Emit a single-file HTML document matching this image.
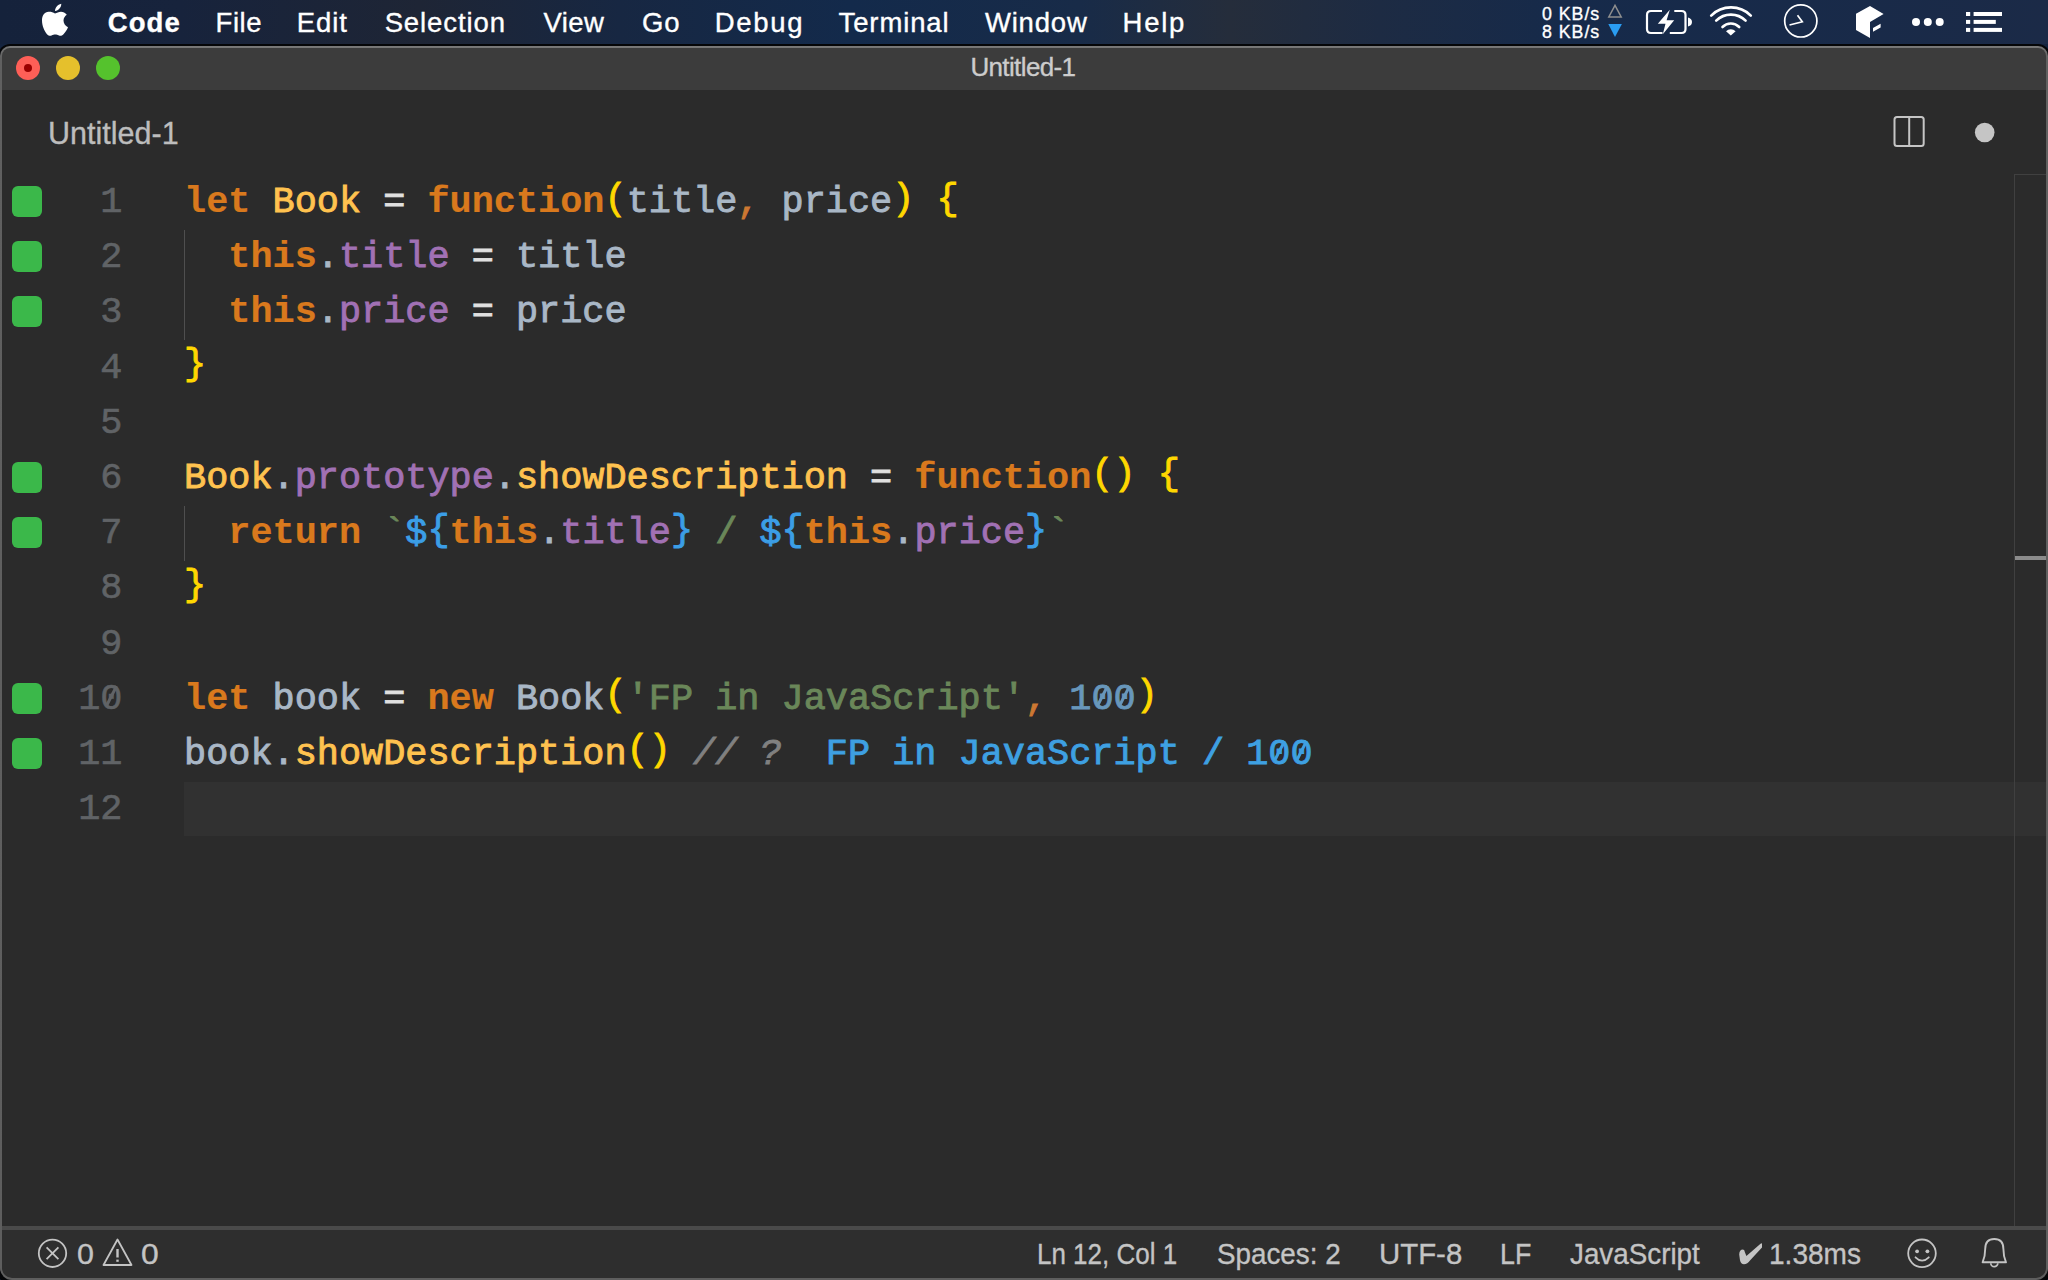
<!DOCTYPE html>
<html><head><meta charset="utf-8">
<style>
html,body{margin:0;padding:0;width:2048px;height:1280px;overflow:hidden;background:#15243f;}
*{box-sizing:border-box}
.a{position:absolute}
.tx{position:absolute;white-space:nowrap;font-family:"Liberation Sans",sans-serif;-webkit-text-stroke:0.35px}
#menubar{position:absolute;left:0;top:0;width:2048px;height:44px;background:linear-gradient(90deg,#15223b 0,#17233c 180px,#1e2535 420px,#172742 620px,#132a4b 850px,#182b48 1080px,#252d3b 1230px,#1d2b43 1380px,#162a4a 1560px,#182a49 1800px,#1b2a47 2048px)}
#shadow{position:absolute;left:-2px;top:44px;width:2052px;height:1240px;background:#050608;border-radius:12px}
#win{position:absolute;left:0;top:46px;width:2048px;height:1234px;background:linear-gradient(#7a7a7a 0,#747474 2px,#606060 12px,#5e5e5e);border-radius:10px 10px 12px 12px;overflow:hidden}
#titlebar{position:absolute;left:2px;top:2px;width:2044px;height:42px;background:#3c3c3c;border-radius:8px 8px 0 0}
#editor{position:absolute;left:2px;top:44px;width:2044px;height:1136px;background:#2b2b2b}
#status{position:absolute;left:2px;top:1180px;width:2044px;height:52px;background:#2e2e2e;border-top:4px solid #4a4a4a;border-radius:0 0 10px 10px}
.tl{position:absolute;top:56px;width:24px;height:24px;border-radius:50%}
#code{position:absolute;left:184px;top:175px;font-family:"Liberation Mono",monospace;font-size:36.89px;line-height:55.2px;white-space:pre;color:#a9b7c6;-webkit-text-stroke:0.9px}
#code div{height:55.2px}
#nums{position:absolute;left:38.5px;width:84px;top:175px;font-family:"Liberation Mono",monospace;font-size:36.89px;line-height:55.2px;white-space:pre;color:#606366;text-align:right;-webkit-text-stroke:0.6px}
#nums div{height:55.2px}
.gs{position:absolute;left:12px;width:30px;height:31px;background:#3bb84a;border-radius:6px}
.k{color:#d9791d;font-weight:bold;-webkit-text-stroke:0.2px}
.c{color:#ffc24f}
.p{color:#ffd700;position:relative;top:-3.5px}
.up{position:relative;top:-3px}
.o{color:#e0e0e0}
.pr{color:#a171b4}
.s{color:#6a8759}
.n{color:#6897bb}
.t{color:#3b9ee6}
.cm{color:#808080;font-style:italic}
.q{color:#3ea0e2}
.cma{color:#cc7832}
.z{position:relative}
.z::after{content:"";position:absolute;left:9.6px;top:7px;width:3.2px;height:22px;background:currentColor;transform:rotate(27deg)}
</style></head><body>
<div id="menubar"></div>
<div id="shadow"></div>
<div id="win">
  <div id="titlebar"></div>
  <div id="editor"></div>
  <div id="status"></div>
</div>
<div class="tl" style="left:16px;background:#fe5f57"></div>
<div class="a" style="left:24px;top:64px;width:8px;height:8px;border-radius:50%;background:#9a0000"></div>
<div class="tl" style="left:56px;background:#e5c02c"></div>
<div class="tl" style="left:96px;background:#55c22d"></div>
<div class="a" style="left:184px;top:782px;width:1862px;height:54px;background:#313131"></div>
<div class="a" style="left:2014px;top:174px;width:32px;height:1px;background:#404040"></div>
<div class="a" style="left:2014px;top:174px;width:1px;height:1052px;background:#404040"></div>
<div class="a" style="left:2015px;top:556px;width:31px;height:4px;background:#8b8b8b"></div>
<div class="a" style="left:184px;top:230px;width:1px;height:110px;background:#4f4f4f"></div>
<div class="a" style="left:184px;top:506px;width:1px;height:55px;background:#4f4f4f"></div>
<svg class="a" style="left:0;top:0" width="80" height="44" viewBox="0 0 80 44"><path fill="#fff" d="M55 13.6C53 12.2 51 11.7 48.6 11.8C44.6 12 42 15.5 42 20.6C42 26 44.5 31.4 47 34.2C48.5 35.8 50 36.1 51.5 35.6C53 35 54 34.6 55.2 34.6C56.5 34.6 57.5 35 59 35.6C60.5 36.1 62 35.8 63.5 34.2C65.5 32 67.2 29.5 68 27.2C65.3 26 63.5 23.5 63.5 20.6C63.5 18 65 16 66.8 14.8C65.3 12.8 63 11.8 61 11.8C58.5 11.8 57 13 55 13.6Z"/><path fill="#fff" d="M55 11C55 8 57.5 4.6 61.3 3.8C61.3 7.5 58.5 10.6 55 11Z"/></svg>
<svg class="a" style="left:1600px;top:0" width="448" height="44" viewBox="1600 0 448 44">
<path d="M1615 5.4L1621.2 17L1608.8 17Z" fill="none" stroke="#8e8e8e" stroke-width="1.5"/>
<path d="M1608.3 24L1621.9 24L1615 37Z" fill="#2a9df2"/>
<path d="M1662 11H1651Q1647 11 1647 15V29Q1647 33 1651 33H1662.5" fill="none" stroke="#fff" stroke-width="2.2"/>
<path d="M1674.3 11H1681.5Q1685.5 11 1685.5 15V29Q1685.5 33 1681.5 33H1669.8" fill="none" stroke="#fff" stroke-width="2.2"/>
<path d="M1688 17.5Q1692 18.5 1692 22Q1692 25.5 1688 26.5Z" fill="#fff"/>
<path d="M1669.8 9.8L1657.8 23.8H1665.5L1662.8 34.2L1674.2 20.2H1666.6Z" fill="#fff"/>
<path d="M1711.2 15.6A28 28 0 0 1 1750.8 15.6" fill="none" stroke="#fff" stroke-width="2.6" stroke-linecap="round"/>
<path d="M1716.2 20.7A20.8 20.8 0 0 1 1745.6 20.7" fill="none" stroke="#fff" stroke-width="2.6" stroke-linecap="round"/>
<path d="M1722.5 27A11.8 11.8 0 0 1 1739.2 27" fill="none" stroke="#fff" stroke-width="2.6" stroke-linecap="round"/>
<path d="M1730.8 35.6L1726 31.3A6.8 6.8 0 0 1 1735.6 31.3Z" fill="#fff"/>
<circle cx="1800.8" cy="20.9" r="16.1" fill="none" stroke="#fff" stroke-width="1.7"/>
<path d="M1797.5 15.3L1802.3 21.7L1789.5 25" fill="none" stroke="#fff" stroke-width="1.7"/>
<path d="M1870 6L1883.6 14L1870 22V38L1856 30V13.8Z" fill="#fff"/>
<path d="M1873 28L1880.6 23.8V27.4L1873 31.7Z" fill="#fff"/>
<circle cx="1916" cy="22" r="4" fill="#fff"/><circle cx="1927.8" cy="22" r="4" fill="#fff"/><circle cx="1939.7" cy="22" r="4" fill="#fff"/>
<rect x="1966" y="12" width="4.2" height="4" fill="#fff"/><rect x="1966" y="19.9" width="4.2" height="4" fill="#fff"/><rect x="1966" y="27.9" width="4.2" height="4" fill="#fff"/>
<rect x="1973.6" y="12" width="28.4" height="4" fill="#fff"/><rect x="1973.6" y="19.9" width="22.2" height="4" fill="#fff"/><rect x="1973.6" y="27.9" width="28.4" height="4" fill="#fff"/>
</svg>
<div class="tx" style="left:107.84px;top:-7.23px;font-size:27.5px;line-height:60px;letter-spacing:1.031px;color:#ffffff;font-weight:bold;">Code</div>
<div class="tx" style="left:215.55px;top:-7.23px;font-size:27.5px;line-height:60px;letter-spacing:0.550px;color:#ffffff;">File</div>
<div class="tx" style="left:296.85px;top:-7.23px;font-size:27.5px;line-height:60px;letter-spacing:0.889px;color:#ffffff;">Edit</div>
<div class="tx" style="left:384.64px;top:-7.23px;font-size:27.5px;line-height:60px;letter-spacing:0.897px;color:#ffffff;">Selection</div>
<div class="tx" style="left:543.40px;top:-7.23px;font-size:27.5px;line-height:60px;letter-spacing:0.452px;color:#ffffff;">View</div>
<div class="tx" style="left:641.91px;top:-7.23px;font-size:27.5px;line-height:60px;letter-spacing:0.919px;color:#ffffff;">Go</div>
<div class="tx" style="left:714.65px;top:-7.23px;font-size:27.5px;line-height:60px;letter-spacing:1.689px;color:#ffffff;">Debug</div>
<div class="tx" style="left:838.57px;top:-7.23px;font-size:27.5px;line-height:60px;letter-spacing:0.875px;color:#ffffff;">Terminal</div>
<div class="tx" style="left:984.90px;top:-7.23px;font-size:27.5px;line-height:60px;letter-spacing:0.831px;color:#ffffff;">Window</div>
<div class="tx" style="left:1122.55px;top:-7.23px;font-size:27.5px;line-height:60px;letter-spacing:1.768px;color:#ffffff;">Help</div>
<div class="tx" style="left:1542.04px;top:-16.17px;font-size:17.8px;line-height:60px;letter-spacing:0.955px;color:#ffffff;">0 KB/s</div>
<div class="tx" style="left:1542.04px;top:2.23px;font-size:17.8px;line-height:60px;letter-spacing:0.955px;color:#ffffff;">8 KB/s</div>
<div class="tx" style="left:970.38px;top:37.29px;font-size:26px;line-height:60px;letter-spacing:-0.622px;color:#cccccc;">Untitled-1</div>
<div class="tx" style="left:47.89px;top:102.91px;font-size:32px;line-height:60px;letter-spacing:0.000px;color:#bdbdbd;transform:scaleX(0.9539);transform-origin:0 0;">Untitled-1</div>
<div class="tx" style="left:76.65px;top:1224.15px;font-size:29px;line-height:60px;letter-spacing:0.000px;color:#c4c4c4;transform:scaleX(1.0483);transform-origin:0 0;">0</div>
<div class="tx" style="left:141.31px;top:1224.15px;font-size:29px;line-height:60px;letter-spacing:0.000px;color:#c4c4c4;transform:scaleX(1.0966);transform-origin:0 0;">0</div>
<div class="tx" style="left:1036.97px;top:1223.60px;font-size:30px;line-height:60px;letter-spacing:0.000px;color:#c4c4c4;transform:scaleX(0.8659);transform-origin:0 0;">Ln 12, Col 1</div>
<div class="tx" style="left:1217.33px;top:1223.60px;font-size:30px;line-height:60px;letter-spacing:0.000px;color:#c4c4c4;transform:scaleX(0.9264);transform-origin:0 0;">Spaces: 2</div>
<div class="tx" style="left:1378.86px;top:1223.60px;font-size:30px;line-height:60px;letter-spacing:0.000px;color:#c4c4c4;transform:scaleX(0.9792);transform-origin:0 0;">UTF-8</div>
<div class="tx" style="left:1499.61px;top:1223.60px;font-size:30px;line-height:60px;letter-spacing:0.000px;color:#c4c4c4;transform:scaleX(0.8932);transform-origin:0 0;">LF</div>
<div class="tx" style="left:1569.87px;top:1223.60px;font-size:30px;line-height:60px;letter-spacing:0.000px;color:#c4c4c4;transform:scaleX(0.9264);transform-origin:0 0;">JavaScript</div>
<div class="tx" style="left:1769.05px;top:1223.60px;font-size:30px;line-height:60px;letter-spacing:0.000px;color:#c4c4c4;transform:scaleX(0.9355);transform-origin:0 0;">1.38ms</div>
<svg class="a" style="left:1880px;top:100px" width="140" height="60" viewBox="1880 100 140 60">
<rect x="1894.5" y="117" width="29.2" height="29" rx="2.5" fill="none" stroke="#c5c5c5" stroke-width="2"/>
<line x1="1909.2" y1="117" x2="1909.2" y2="146" stroke="#c5c5c5" stroke-width="2"/>
<circle cx="1984.7" cy="132.5" r="9.8" fill="#c5c5c5"/>
</svg>
<svg class="a" style="left:0;top:1226px" width="2048" height="54" viewBox="0 1226 2048 54">
<circle cx="52.5" cy="1253.3" r="13.7" fill="none" stroke="#c4c4c4" stroke-width="1.8"/>
<path d="M46.6 1247.4L58.4 1259.2M58.4 1247.4L46.6 1259.2" stroke="#c4c4c4" stroke-width="1.8"/>
<path d="M117.5 1239.5L131.5 1265H103.5Z" fill="none" stroke="#c4c4c4" stroke-width="1.8" stroke-linejoin="round"/>
<path d="M117.5 1249V1257.5" stroke="#c4c4c4" stroke-width="2.4"/><rect x="116.3" y="1259.6" width="2.4" height="2.2" fill="#c4c4c4"/>
<path d="M1739.2 1254.5Q1739.4 1249.6 1743 1249.5Q1744.6 1249.7 1744.9 1252.2L1746.4 1256L1758.8 1245.2Q1760.6 1243.4 1762 1243.2L1762 1247.4L1750.2 1260.2Q1747.4 1264.2 1744 1264.2Q1740.9 1264 1740 1260.2Z" fill="#c4c4c4"/>
<circle cx="1922" cy="1253.3" r="13.8" fill="none" stroke="#c4c4c4" stroke-width="1.8"/>
<circle cx="1917.1" cy="1251.3" r="1.9" fill="#c4c4c4"/><circle cx="1927.4" cy="1251.3" r="1.9" fill="#c4c4c4"/>
<path d="M1915.5 1257.3Q1922 1264 1928.8 1257.3" fill="none" stroke="#c4c4c4" stroke-width="1.8" stroke-linecap="round"/>
<path d="M1985.2 1249Q1985.2 1239 1994.3 1239Q2003.4 1239 2003.4 1249Q2003.4 1256.5 2006 1262.3H1982.6Q1985.2 1256.5 1985.2 1249Z" fill="none" stroke="#c4c4c4" stroke-width="1.9" stroke-linejoin="round"/>
<path d="M1990.8 1263.2A3.5 3.5 0 0 0 1997.8 1263.2" fill="none" stroke="#c4c4c4" stroke-width="1.7"/>
</svg>
<div id="nums"><div>1</div><div>2</div><div>3</div><div>4</div><div>5</div><div>6</div><div>7</div><div>8</div><div>9</div><div>1<span class="z">0</span></div><div>11</div><div>12</div></div>
<div id="code"><div><span class="k">let</span> <span class="c">Book</span> <span class="o">=</span> <span class="k">function</span><span class="p">(</span>title<span class="cma">,</span> price<span class="p">)</span> <span class="p">{</span></div><div>  <span class="k">this</span>.<span class="pr">title</span> <span class="o">=</span> title</div><div>  <span class="k">this</span>.<span class="pr">price</span> <span class="o">=</span> price</div><div><span class="p">}</span></div><div></div><div><span class="c">Book</span>.<span class="pr">prototype</span>.<span class="c">showDescription</span> <span class="o">=</span> <span class="k">function</span><span class="p">()</span> <span class="p">{</span></div><div>  <span class="k">return</span> <span class="s">`</span><span class="t">$</span><span class="t up">{</span><span class="k">this</span>.<span class="pr">title</span><span class="t up">}</span><span class="s"> / </span><span class="t">$</span><span class="t up">{</span><span class="k">this</span>.<span class="pr">price</span><span class="t up">}</span><span class="s">`</span></div><div><span class="p">}</span></div><div></div><div><span class="k">let</span> book <span class="o">=</span> <span class="k">new</span> Book<span class="p">(</span><span class="s">'FP in JavaScript'</span><span class="cma">,</span> <span class="n">1<span class="z">0</span><span class="z">0</span></span><span class="p">)</span></div><div>book.<span class="c">showDescription</span><span class="p">()</span> <span class="cm">// ?</span>  <span class="q">FP in JavaScript / 1<span class="z">0</span><span class="z">0</span></span></div><div></div></div>
<div class="gs" style="top:186.0px"></div><div class="gs" style="top:241.2px"></div><div class="gs" style="top:296.4px"></div><div class="gs" style="top:462.0px"></div><div class="gs" style="top:517.2px"></div><div class="gs" style="top:682.8px"></div><div class="gs" style="top:738.0px"></div>
</body></html>
